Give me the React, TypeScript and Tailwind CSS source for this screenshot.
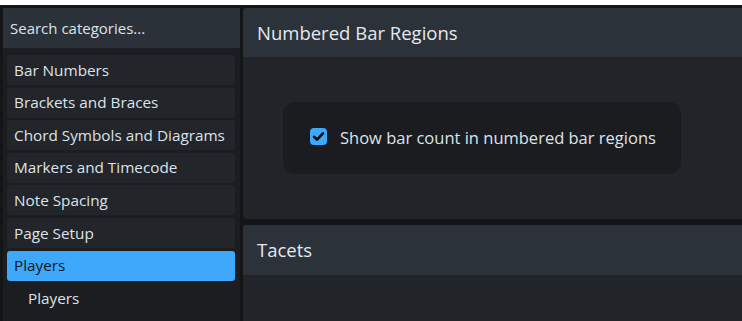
import React from "react";

const items = [
  "Bar Numbers",
  "Brackets and Braces",
  "Chord Symbols and Diagrams",
  "Markers and Timecode",
  "Note Spacing",
  "Page Setup",
];

export default function App() {
  return (
    <div
      className="w-[742px] h-[321px] overflow-hidden bg-white"
      style={{ fontFamily: '"Open Sans", "Noto Sans", sans-serif' }}
    >
      <div className="h-[5px] bg-white" />
      <div className="flex h-[316px] bg-[#141517] pt-[3px]">
        <div className="w-[237px] ml-[3px] flex flex-col bg-[#1b1d20]">
          <div className="h-[40px] bg-[#2b3139] flex items-center pl-[7px] text-[15px] text-[#dde3ea]">
            Search categories...
          </div>
          <div className="flex flex-col gap-[2.6px] pt-[7px] pl-[4px] pr-[5px]">
            {items.map((t) => (
              <div
                key={t}
                className="h-[30px] rounded-[3px] bg-[#222529] flex items-center pl-[7px] text-[15.3px] text-[#dde3ea]"
              >
                {t}
              </div>
            ))}
            <div className="h-[30px] rounded-[3px] bg-[#3ea8fa] flex items-center pl-[7px] text-[15.3px] text-[#10151b]">
              Players
            </div>
            <div className="h-[30px] flex items-center pl-[21px] text-[15.3px] text-[#dde3ea]">
              Players
            </div>
          </div>
        </div>
        <div className="flex-1 ml-[3px] flex flex-col gap-[6px]">
          <div className="h-[211px] rounded-tl-[3px] rounded-bl-[3px] bg-[#212428] flex flex-col">
            <div className="h-[49px] bg-[#2c323a] flex items-center pl-[14px] text-[18.5px] text-[#e4e9ee] rounded-tl-[3px]">
              Numbered Bar Regions
            </div>
            <div className="pl-[40px] pt-[45px]">
              <div className="w-[398px] h-[72px] rounded-[12px] bg-[#1a1c20] flex items-center pl-[27px] gap-[13px]">
                <div className="w-[17px] h-[17px] mb-[3px] rounded-[4px] bg-[#3ea8fa] flex items-center justify-center">
                  <svg width="15" height="15" viewBox="0 0 15 15">
                    <path
                      d="M3 7.8 L6 10.6 L12 4.3"
                      fill="none"
                      stroke="#0b0d10"
                      strokeWidth="2.6"
                      strokeLinecap="round"
                      strokeLinejoin="round"
                    />
                  </svg>
                </div>
                <span className="text-[16.5px] text-[#dde3ea]">
                  Show bar count in numbered bar regions
                </span>
              </div>
            </div>
          </div>
          <div className="flex-1 rounded-tl-[3px] bg-[#212428] flex flex-col">
            <div className="h-[50px] bg-[#2c323a] flex items-center pl-[14px] text-[18.5px] text-[#e4e9ee] rounded-tl-[3px]">
              Tacets
            </div>
          </div>
        </div>
      </div>
    </div>
  );
}
